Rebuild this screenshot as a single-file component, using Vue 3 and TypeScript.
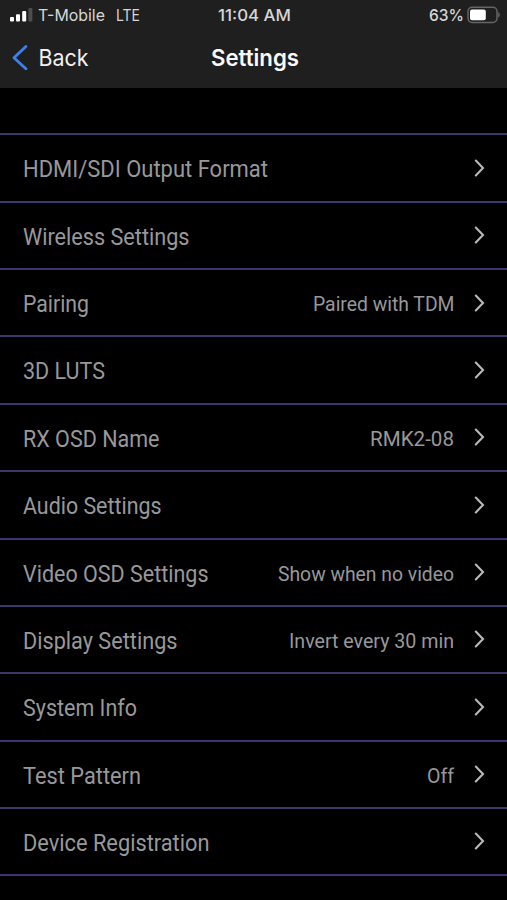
<script setup lang="ts">
interface SettingRow {
  label: string
  width: number
  value?: string
  valueWidth?: number
}

const rows: SettingRow[] = [
  { label: 'HDMI/SDI Output Format', width: 245 },
  { label: 'Wireless Settings', width: 166.5 },
  { label: 'Pairing', width: 66 },
  { label: '3D LUTS', width: 82 },
  { label: 'RX OSD Name', width: 136.5 },
  { label: 'Audio Settings', width: 138.5 },
  { label: 'Video OSD Settings', width: 185.5 },
  { label: 'Display Settings', width: 154.5 },
  { label: 'System Info', width: 114 },
  { label: 'Test Pattern', width: 118 },
  { label: 'Device Registration', width: 186.5 },
]
rows[2].value = 'Paired with TDM'
rows[2].valueWidth = 141.5
rows[4].value = 'RMK2-08'
rows[4].valueWidth = 84
rows[6].value = 'Show when no video'
rows[6].valueWidth = 176
rows[7].value = 'Invert every 30 min'
rows[7].valueWidth = 165
rows[9].value = 'Off'
rows[9].valueWidth = 27
</script>

<template>
  <div class="screen">
    <header class="header">
      <div class="status">
        <div class="carrier">
          <svg class="signal" width="23" height="14" viewBox="0 0 23 14">
            <rect x="0" y="9" width="4" height="4.6" rx="1" fill="#fff" />
            <rect x="6" y="6.3" width="4" height="7.3" rx="1" fill="#fff" />
            <rect x="12.2" y="3" width="4" height="10.6" rx="1" fill="#fff" />
            <rect x="18.4" y="0" width="4" height="13.6" rx="1" fill="#4c4c4d" />
          </svg>
          <svg class="text" width="103" height="20">
            <text class="status-text" x="0" y="15" textLength="67" lengthAdjust="spacingAndGlyphs">T-Mobile</text>
            <text class="status-text" x="78" y="15" textLength="24" lengthAdjust="spacingAndGlyphs">LTE</text>
          </svg>
        </div>
        <svg class="text" width="73" height="20">
          <text class="status-text time" x="0" y="15" textLength="73" lengthAdjust="spacingAndGlyphs">11:04 AM</text>
        </svg>
        <div class="power">
          <svg class="text" width="35" height="20">
            <text class="status-text percent" x="0" y="15" textLength="35" lengthAdjust="spacingAndGlyphs">63%</text>
          </svg>
          <svg class="battery" width="34" height="18" viewBox="0 0 34 18">
            <rect x="1" y="1.2" width="29" height="15.2" rx="4.2" fill="none" stroke="#656566" stroke-width="1.5" />
            <path d="M31.2 6.3c2.1.4 2.1 4.7 0 5.1z" fill="#656566" />
            <rect x="3" y="3.4" width="15.8" height="10.8" rx="2" fill="#fff" />
          </svg>
        </div>
      </div>
      <nav class="nav">
        <div class="back">
          <svg width="16" height="26" viewBox="0 0 16 26">
            <path d="M13.9 2.4 2 13.8l11.9 11" fill="none" stroke="#3c82ed" stroke-width="2.8" stroke-linecap="round" stroke-linejoin="round" />
          </svg>
          <svg class="text" width="50" height="30">
            <text class="back-text" x="-0.5" y="22" textLength="50" lengthAdjust="spacingAndGlyphs">Back</text>
          </svg>
        </div>
        <svg class="text" width="88" height="30">
          <text class="title-text" x="0" y="22" textLength="88" lengthAdjust="spacingAndGlyphs">Settings</text>
        </svg>
        <span></span>
      </nav>
    </header>

    <main class="list">
      <div v-for="row in rows" :key="row.label" class="row">
        <svg class="text" :width="row.width" height="32">
          <text class="label-text" x="0" y="25" :textLength="row.width" lengthAdjust="spacingAndGlyphs">{{ row.label }}</text>
        </svg>
        <div class="trail">
          <svg v-if="row.value" class="text" :width="row.valueWidth" height="32">
            <text class="value-text" x="0" y="24" :textLength="row.valueWidth" lengthAdjust="spacingAndGlyphs">{{ row.value }}</text>
          </svg>
          <svg class="chevron" width="11" height="18" viewBox="0 0 11 18">
            <path d="m1.8 1.6 7.2 7.4-7.2 7.4" fill="none" stroke="#b9b9ba" stroke-width="2.1" stroke-linecap="round" stroke-linejoin="miter" />
          </svg>
        </div>
      </div>
    </main>
  </div>
</template>

<style>
body {
  background: #000;
}
</style>

<style scoped>
.screen {
  width: 507px;
  height: 900px;
  overflow: hidden;
  background: #000;
  font-family: Inter, "Liberation Sans", sans-serif;
}

svg {
  display: block;
  flex: none;
}

.text {
  overflow: visible;
}

.header {
  height: 88px;
  background: #1f1f1f;
}

.status,
.nav {
  display: grid;
  grid-template-columns: 1fr auto 1fr;
}

.status {
  height: 30px;
  padding: 5.5px 6.5px 0 9.5px;
  box-sizing: border-box;
}

.status > .text {
  margin-left: -2px;
}

.carrier,
.power,
.back {
  display: flex;
}

.signal {
  margin: 2px 5px 0 0;
}

.power {
  justify-content: flex-end;
  gap: 3px;
}

.status-text {
  font-size: 16.5px;
  font-weight: 400;
  fill: #d6d6d6;
}

.time,
.percent {
  font-weight: 500;
}

.nav {
  height: 58px;
  padding: 14px 10px 0 12px;
  box-sizing: border-box;
}

.back {
  gap: 11px;
}

.back-text {
  font-size: 23px;
  fill: #f1f1f1;
}

.title-text {
  font-size: 23px;
  font-weight: 600;
  fill: #fafafa;
}

.list {
  margin-top: 45.4px;
  border-bottom: 2px solid #3f356f;
}

.row {
  display: flex;
  justify-content: space-between;
  height: 67.37px;
  box-sizing: border-box;
  padding: 17px 22px 0 22.5px;
  border-top: 2px solid #3f356f;
}

.trail {
  display: flex;
  gap: 20px;
}

.chevron {
  margin-top: 6.5px;
}

.label-text,
.value-text {
  font-family: Roboto, "Noto Sans", sans-serif;
  fill: #98989a;
}

.label-text {
  font-size: 23px;
}

.value-text {
  font-size: 20px;
}
</style>
